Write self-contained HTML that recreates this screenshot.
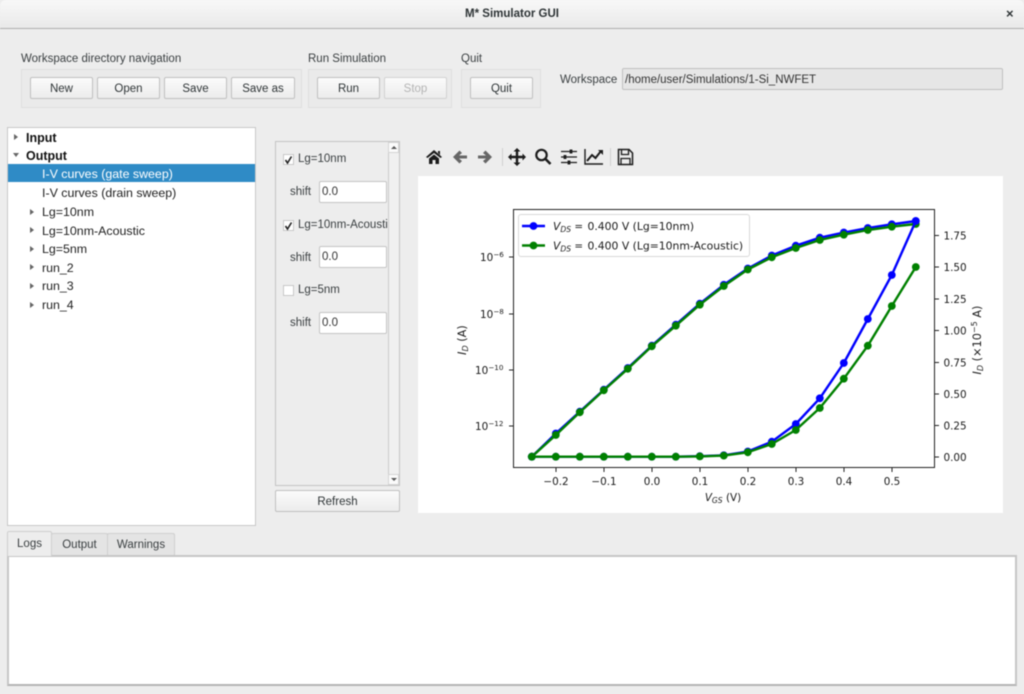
<!DOCTYPE html>
<html><head><meta charset="utf-8"><style>
html,body{margin:0;padding:0;width:1024px;height:694px;overflow:hidden;background:#ededed}
#r{position:absolute;left:0;top:0;width:1024px;height:694px;overflow:hidden;background:#ededed;font-family:"Liberation Sans",sans-serif;font-size:11.5px;color:#3a3f41;filter:blur(.4px)}
#r div{position:absolute;box-sizing:border-box;white-space:nowrap}
.g{background:#eaeaea;border:1px solid #dfdfdf;height:39px;top:69px}
.b{background:linear-gradient(#fbfbfb,#ececec);border:1px solid #c0c0c0;border-radius:2px;height:22px;top:77px;text-align:center;line-height:22px;color:#2e3436}
.l{top:52px;line-height:14px}
.t{left:42px;font-size:12.4px;line-height:18px;color:#222}
.a{width:0;height:0;border-top:3px solid transparent;border-bottom:3px solid transparent;border-left:4px solid #666}
.i{background:#fff;border:1px solid #c4c4c4;border-radius:2px;left:319px;width:68px;height:22px;line-height:20px;padding-left:2px;color:#333}
.c{left:283px;width:11px;height:11px;background:#fff;border:1px solid #c8c8c8}
.tab{top:533px;height:22px;background:#e4e4e4;border:1px solid #cfcfcf;border-bottom:0;border-radius:2px 2px 0 0;text-align:center;line-height:22px}
</style></head><body><div id="r">
<div style="left:0;top:0;width:1024px;height:29px;background:linear-gradient(#f8f8f8,#e9e9e9);border-bottom:1px solid #aeaeae;border-radius:6px 6px 0 0;text-align:center;line-height:28px;font-weight:bold;font-size:11.5px;color:#2e3436">M* Simulator GUI</div>
<div style="left:1006px;top:6px;font-size:13px;line-height:16px;font-weight:bold;color:#2e3436">×</div>

<div class="l" style="left:21px">Workspace directory navigation</div>
<div class="l" style="left:308px">Run Simulation</div>
<div class="l" style="left:461px">Quit</div>
<div class="g" style="left:21px;width:281px"></div>
<div class="g" style="left:308px;width:144px"></div>
<div class="g" style="left:461px;width:80px"></div>
<div class="b" style="left:30px;width:63px">New</div>
<div class="b" style="left:97px;width:63px">Open</div>
<div class="b" style="left:164px;width:63px">Save</div>
<div class="b" style="left:231px;width:64px">Save as</div>
<div class="b" style="left:317px;width:63px">Run</div>
<div class="b" style="left:384px;width:63px;color:#b4b4b4;border-color:#d2d2d2">Stop</div>
<div class="b" style="left:470px;width:63px">Quit</div>
<div style="left:560px;top:73px;line-height:14px">Workspace</div>
<div style="left:622px;top:68px;width:381px;height:22px;background:#e6e6e6;border:1px solid #c0c0c0;border-radius:2px;line-height:22px;padding-left:2px;color:#333">/home/user/Simulations/1-Si_NWFET</div>

<div style="left:7px;top:127px;width:249px;height:399px;background:#fff;border:1px solid #c8c8c8"></div>
<div style="left:8px;top:164px;width:247px;height:18px;background:#2f8bc6"></div>
<div class="a" style="left:14px;top:134px"></div>
<div class="a" style="left:13px;top:153px;border:3px solid transparent;border-top:4px solid #666;border-bottom:0"></div>
<div class="t" style="left:26px;top:129px;font-weight:bold;color:#111;font-size:12.5px">Input</div>
<div class="t" style="left:26px;top:147px;font-weight:bold;color:#111;font-size:12.5px">Output</div>
<div class="t" style="top:165px;color:#fff">I-V curves (gate sweep)</div>
<div class="t" style="top:184px">I-V curves (drain sweep)</div>
<div class="a" style="left:30px;top:209px"></div><div class="t" style="top:203px">Lg=10nm</div>
<div class="a" style="left:30px;top:227px"></div><div class="t" style="top:222px">Lg=10nm-Acoustic</div>
<div class="a" style="left:30px;top:246px"></div><div class="t" style="top:240px">Lg=5nm</div>
<div class="a" style="left:30px;top:264px"></div><div class="t" style="top:259px">run_2</div>
<div class="a" style="left:30px;top:283px"></div><div class="t" style="top:277px">run_3</div>
<div class="a" style="left:30px;top:302px"></div><div class="t" style="top:296px">run_4</div>

<div style="left:275px;top:141px;width:125px;height:345px;background:#ededed;border:1px solid #c4c4c4;overflow:hidden">
 <div style="left:112px;top:0;width:11px;height:343px;background:#f0f0f0;border-left:1px solid #cccccc"></div>
 <div style="left:112px;top:0;width:11px;height:11px;background:#fbfbfb;border:1px solid #d4d4d4"></div>
 <div style="left:112px;top:332px;width:11px;height:11px;background:#fbfbfb;border:1px solid #d4d4d4"></div>
 <div style="left:115px;top:4px;border:3px solid transparent;border-bottom:3px solid #555;border-top:0"></div>
 <div style="left:115px;top:336px;border:3px solid transparent;border-top:3px solid #555;border-bottom:0"></div>
 <div style="left:22px;top:10px;line-height:14px">Lg=10nm</div>
 <div style="left:22px;top:76px;line-height:14px;width:90px;overflow:hidden">Lg=10nm-Acoustic</div>
 <div style="left:22px;top:141px;line-height:14px">Lg=5nm</div>
 <div style="left:14px;top:43px;line-height:14px">shift</div>
 <div style="left:14px;top:109px;line-height:14px">shift</div>
 <div style="left:14px;top:174px;line-height:14px">shift</div>
</div>
<div class="c" style="top:154px"></div><div class="c" style="top:220px"></div><div class="c" style="top:285px"></div>
<svg style="position:absolute;left:283px;top:154px" width="11" height="80"><path d="M2.5 6L4.5 9L8.5 2.5M2.5 72L4.5 75L8.5 68.5" fill="none" stroke="#222" stroke-width="1.6"/></svg>
<div class="i" style="top:181px">0.0</div><div class="i" style="top:246px">0.0</div><div class="i" style="top:312px">0.0</div>
<div class="b" style="left:275px;top:490px;width:125px;height:22px">Refresh</div>

<svg style="position:absolute;left:0;top:0" width="1024" height="694">
 <g fill="#1c1c1c">
  <path d="M434 150L442 157L440.5 158L434 153L427.5 158L426 157ZM438 151h2v4l-2-2zM429 158.500L434 154.500L439 158.500V164H435.500V160H432.500V164H429Z"/>
  <path fill="#666" d="M453 157L459.500 150.500L462 153L459 155.500H467V158.500H459L462 161L459.500 163.500Z"/>
  <path fill="#666" d="M492 157L485.500 150.500L483 153L486 155.500H478V158.500H486L483 161L485.500 163.500Z"/>
  <path d="M517 148L520.500 151.500H518.200V155.800H522.500V153.500L526 157L522.500 160.500V158.200H518.200V162.500H520.500L517 166L513.500 162.500H515.800V158.200H511.500V160.500L508 157L511.500 153.500V155.800H515.800V151.500H513.500Z"/>
 </g>
 <circle cx="541.500" cy="155" r="5.200" fill="none" stroke="#1c1c1c" stroke-width="2.200"/>
 <path d="M545.500 159L550.500 164" stroke="#1c1c1c" stroke-width="2.600" fill="none"/>
 <path d="M561 151.500H577M561 157H577M561 162.500H577" stroke="#1c1c1c" stroke-width="1.300" fill="none"/>
 <path d="M571 149.500v4M565 155v4M569 160.500v4" stroke="#1c1c1c" stroke-width="2.800" fill="none"/>
 <path d="M585 149V164H603" stroke="#1c1c1c" stroke-width="1.400" fill="none"/>
 <path d="M587 161L592 155L595.500 158L601 151" stroke="#1c1c1c" stroke-width="2" fill="none"/>
 <path d="M598 150H603V155Z" fill="#1c1c1c"/>
 <path d="M618.500 149.500H629L632.500 153V164.500H618.500Z" fill="none" stroke="#1c1c1c" stroke-width="1.500"/>
 <path d="M621.500 149.500V154.500H628.500V149.500M621 164V158.500H630V164" fill="none" stroke="#1c1c1c" stroke-width="1.300"/>
 <path d="M502.500 148V166M610.500 148V166" stroke="#d0d0d0" stroke-width="1"/>

 <rect x="418" y="176" width="585" height="337" fill="#fff"/>
 <defs>
  <marker id="mb" markerUnits="userSpaceOnUse" markerWidth="10" markerHeight="10" refX="5" refY="5"><circle cx="5" cy="5" r="3.900" fill="#0000ff"/></marker>
  <marker id="mg" markerUnits="userSpaceOnUse" markerWidth="10" markerHeight="10" refX="5" refY="5"><circle cx="5" cy="5" r="3.900" fill="#008000"/></marker>
 </defs>
 <rect x="513.500" y="209.500" width="421" height="258" fill="none" stroke="#222" stroke-width="1"/>
 <path d="M556 468v4M604 468v4M652 468v4M700 468v4M748 468v4M796 468v4M844 468v4M892 468v4M513 257h-4M513 314h-4M513 370h-4M513 426h-4M935 457h4M935 425.500h4M935 394h4M935 362.500h4M935 330.500h4M935 299h4M935 267h4M935 235.500h4" stroke="#222" stroke-width="1" fill="none"/>
 <g fill="none" stroke-width="2.400" stroke-linejoin="round">
  <polyline stroke="#0000ff" marker-start="url(#mb)" marker-mid="url(#mb)" marker-end="url(#mb)" points="531.800,456.700 555.800,433.500 579.800,411.700 603.800,389.700 627.800,368 651.800,345.700 675.800,324.700 699.800,303.700 723.800,284.800 747.800,268.500 771.800,255.500 795.800,245.700 819.800,237.700 843.800,232.500 867.800,228 891.800,224.300 915.800,221"/>
  <polyline stroke="#008000" marker-start="url(#mg)" marker-mid="url(#mg)" marker-end="url(#mg)" points="531.800,456.700 555.800,435 579.800,412.300 603.800,390.300 627.800,368.800 651.800,346.300 675.800,325.700 699.800,304.700 723.800,286 747.800,269.500 771.800,257.300 795.800,248 819.800,240 843.800,234.700 867.800,230 891.800,226.700 915.800,224"/>
  <polyline stroke="#0000ff" marker-start="url(#mb)" marker-mid="url(#mb)" marker-end="url(#mb)" points="531.800,456.700 555.800,456.700 579.800,456.700 603.800,456.700 627.800,456.700 651.800,456.700 675.800,456.700 699.800,456.200 723.800,455.300 747.800,451.500 771.800,441.700 795.800,424 819.800,398.300 843.800,363 867.800,319 891.800,275 915.800,221"/>
  <polyline stroke="#008000" marker-start="url(#mg)" marker-mid="url(#mg)" marker-end="url(#mg)" points="531.800,456.700 555.800,456.700 579.800,456.700 603.800,456.700 627.800,456.700 651.800,456.700 675.800,456.700 699.800,456.400 723.800,455.600 747.800,452.300 771.800,444 795.800,430 819.800,408 843.800,378.700 867.800,345.700 891.800,306 915.800,267"/>
 </g>
 <rect x="518.500" y="214.500" width="231" height="42" rx="2.500" fill="#fff" fill-opacity=".9" stroke="#d8d8d8"/>
 <path d="M522 226H545" stroke="#0000ff" stroke-width="2.400"/><circle cx="533.500" cy="226" r="3.900" fill="#0000ff"/>
 <path d="M522 245.500H545" stroke="#008000" stroke-width="2.400"/><circle cx="533.500" cy="245.500" r="3.900" fill="#008000"/>
 <g font-family="'DejaVu Sans',sans-serif" font-size="10.400" fill="#1a1a1a">
  <text x="553" y="230"><tspan font-style="italic" font-size="10.800">V</tspan><tspan font-style="italic" font-size="7.600" dy="2">DS</tspan><tspan dy="-2"> = </tspan><tspan x="587.500" font-size="10.800">0.400 V (Lg=10nm)</tspan></text>
  <text x="553" y="249.500"><tspan font-style="italic" font-size="10.800">V</tspan><tspan font-style="italic" font-size="7.600" dy="2">DS</tspan><tspan dy="-2"> = </tspan><tspan x="587.500" font-size="10.800">0.400 V (Lg=10nm-Acoustic)</tspan></text>
  <g text-anchor="middle">
   <text x="556" y="485">−0.2</text><text x="604" y="485">−0.1</text><text x="652" y="485">0.0</text><text x="700" y="485">0.1</text><text x="748" y="485">0.2</text><text x="796" y="485">0.3</text><text x="844" y="485">0.4</text><text x="892" y="485">0.5</text>
   <text x="723" y="501"><tspan font-style="italic">V</tspan><tspan font-style="italic" font-size="7.600" dy="2">GS</tspan><tspan dy="-2"> (V)</tspan></text>
  </g>
  <text x="480" y="261">10<tspan font-size="7.200" dy="-4">−6</tspan></text>
  <text x="480" y="318">10<tspan font-size="7.200" dy="-4">−8</tspan></text>
  <text x="475" y="374">10<tspan font-size="7.200" dy="-4">−10</tspan></text>
  <text x="475" y="430">10<tspan font-size="7.200" dy="-4">−12</tspan></text>
  <text x="943.500" y="461">0.00</text><text x="943.500" y="429.500">0.25</text><text x="943.500" y="398">0.50</text><text x="943.500" y="366.500">0.75</text><text x="943.500" y="334.500">1.00</text><text x="943.500" y="303">1.25</text><text x="943.500" y="271">1.50</text><text x="943.500" y="239.500">1.75</text>
  <text font-size="11.300" transform="translate(466,340) rotate(-90)" text-anchor="middle"><tspan font-style="italic">I</tspan><tspan font-style="italic" font-size="8" dy="2">D</tspan><tspan dy="-2"> (A)</tspan></text>
  <text font-size="11.300" transform="translate(981,340) rotate(-90)" text-anchor="middle"><tspan font-style="italic">I</tspan><tspan font-style="italic" font-size="8" dy="2">D</tspan><tspan dy="-2"> (×10</tspan><tspan font-size="8" dy="-4">−5</tspan><tspan dy="4"> A)</tspan></text>
 </g>
</svg>

<div style="left:7px;top:555px;width:1010px;height:131px;background:#fff;border:2px solid #c6c6c6;border-bottom-color:#b4b4b4"></div>
<div class="tab" style="left:51px;width:57px">Output</div>
<div class="tab" style="left:107px;width:68px">Warnings</div>
<div class="tab" style="left:7px;width:45px;top:531px;height:25px;background:#ededed;line-height:24px;z-index:2">Logs</div>
</div></body></html>
